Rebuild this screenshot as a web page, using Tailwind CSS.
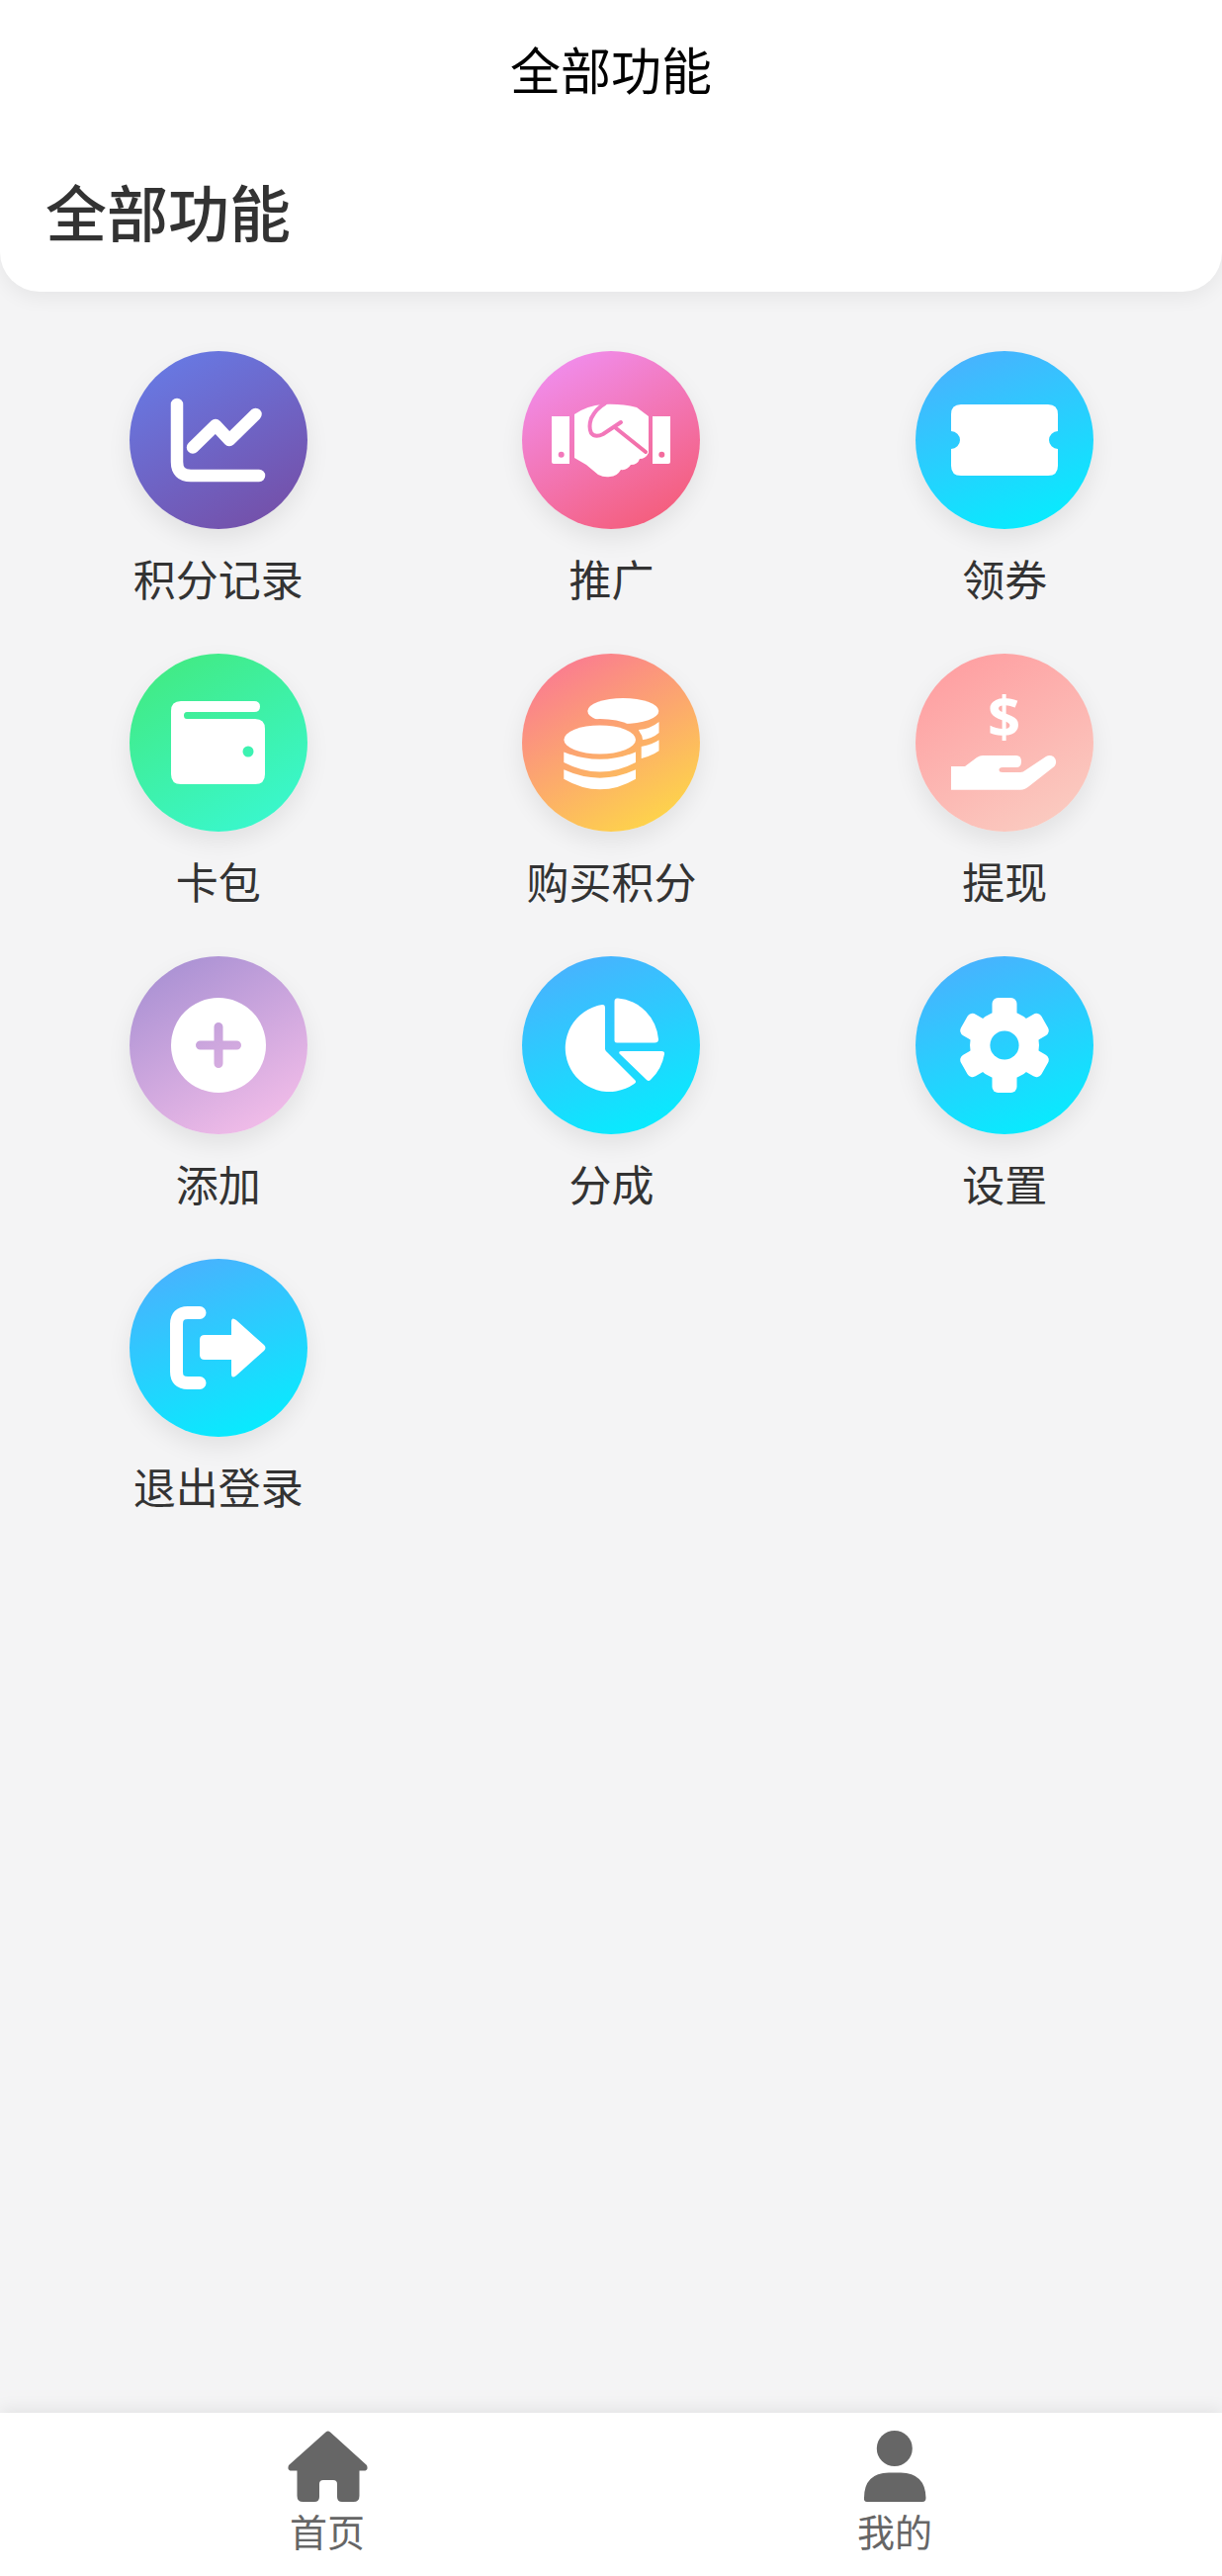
<!DOCTYPE html>
<html lang="zh-CN">
  <head>
    <meta charset="UTF-8" />
    <meta name="viewport" content="width=device-width, initial-scale=1.0" />
    <title>全部功能</title>
    <script src="https://cdn.jsdelivr.net/npm/@tailwindcss/browser@4"></script>
  </head>
  <body class="bg-[#f4f4f5] font-['Noto_Sans_CJK_SC','Liberation_Sans',sans-serif]">
    <div class="flex flex-col h-[2605px] overflow-hidden">
      <!-- header card -->
      <header class="h-[295px] shrink-0 bg-white rounded-b-[40px] shadow-[0_6px_20px_rgba(0,0,0,0.06)]">
        <div class="h-[138px] flex items-center justify-center text-[51px] leading-none text-black">全部功能</div>
        <h1 class="pl-[46px] text-[62px] leading-[150px] font-medium text-[#333]">全部功能</h1>
      </header>

      <!-- grid of functions -->
      <main class="flex-1 grid grid-cols-3 content-start pl-[22px] pr-[21px] pt-[60px]">
        <a class="h-[306px] flex flex-col items-center">
          <div class="w-[180px] h-[180px] rounded-full bg-[linear-gradient(150deg,#667eea,#764ba2)] shadow-[0_10px_24px_rgba(0,0,0,0.08)]">
            <svg viewBox="0 0 180 180" class="w-full h-full" fill="none" stroke="#fff" stroke-width="12.5" stroke-linecap="round" stroke-linejoin="round">
              <path d="M48 54V112Q48 126 62 126H131" />
              <path d="M64 97.5L87 75L101 90L127.5 64" />
            </svg>
          </div>
          <span class="mt-[21px] text-[43px] leading-[56px] text-[#333]">积分记录</span>
        </a>

        <a class="h-[306px] flex flex-col items-center">
          <div class="w-[180px] h-[180px] rounded-full bg-[linear-gradient(150deg,#f093fb,#f5576c)] shadow-[0_10px_24px_rgba(0,0,0,0.08)]">
            <svg viewBox="0 0 180 180" class="w-full h-full">
              <mask id="m-hands" maskUnits="userSpaceOnUse" x="0" y="0" width="180" height="180">
                <rect width="180" height="180" fill="#fff" />
                <circle cx="39.7" cy="104.7" r="3" fill="#000" />
                <circle cx="141.3" cy="104.7" r="3" fill="#000" />
                <path d="M84 53Q75 58 70 68Q67 77 70 83Q74 88 82 84L100 72M95 78L125 102" fill="none" stroke="#000" stroke-width="4" stroke-linecap="round" />
              </mask>
              <g fill="#fff" mask="url(#m-hands)">
                <path d="M30 66H48V114H32Q30 114 30 112Z" />
                <path d="M132 66H150V112Q150 114 148 114H132Z" />
                <path d="M53 64Q66 55 82 54Q100 53 116 57L128 66V103Q125 109 119 109Q117 115 110 115Q106 121 100 120Q96 127 89 127Q83 128 77 125L65 115L53 108Z" />
              </g>
            </svg>
          </div>
          <span class="mt-[21px] text-[43px] leading-[56px] text-[#333]">推广</span>
        </a>

        <a class="h-[306px] flex flex-col items-center">
          <div class="w-[180px] h-[180px] rounded-full bg-[linear-gradient(160deg,#4facfe,#00f2fe)] shadow-[0_10px_24px_rgba(0,0,0,0.08)]">
            <svg viewBox="0 0 180 180" class="w-full h-full" fill="#fff">
              <path d="M46 54H134Q144 54 144 64V81A9 9 0 0 0 144 99V116Q144 126 134 126H46Q36 126 36 116V99A9 9 0 0 0 36 81V64Q36 54 46 54Z" />
            </svg>
          </div>
          <span class="mt-[21px] text-[43px] leading-[56px] text-[#333]">领券</span>
        </a>

        <a class="h-[306px] flex flex-col items-center">
          <div class="w-[180px] h-[180px] rounded-full bg-[linear-gradient(150deg,#43e97b,#38f9d7)] shadow-[0_10px_24px_rgba(0,0,0,0.08)]">
            <svg viewBox="0 0 180 180" class="w-full h-full">
              <mask id="m-wallet" maskUnits="userSpaceOnUse" x="0" y="0" width="180" height="180">
                <rect width="180" height="180" fill="#fff" />
                <circle cx="120" cy="99" r="5.5" fill="#000" />
              </mask>
              <path fill="#fff" mask="url(#m-wallet)" d="M42 58Q42 48 52 48H126Q132 48 132 53.5Q132 59 126 59H58Q55 59 55 62.5Q55 66 58 66H127Q137 66 137 76V122Q137 132 127 132H52Q42 132 42 122Z" />
            </svg>
          </div>
          <span class="mt-[21px] text-[43px] leading-[56px] text-[#333]">卡包</span>
        </a>

        <a class="h-[306px] flex flex-col items-center">
          <div class="w-[180px] h-[180px] rounded-full bg-[linear-gradient(150deg,#fa709a,#fee140)] shadow-[0_10px_24px_rgba(0,0,0,0.08)]">
            <svg viewBox="0 0 180 180" class="w-full h-full" fill="#fff">
              <mask id="m-coins" maskUnits="userSpaceOnUse" x="0" y="0" width="180" height="180">
                <rect width="180" height="180" fill="#fff" />
                <ellipse cx="79" cy="87" rx="43" ry="21" fill="#000" />
              </mask>
              <g mask="url(#m-coins)">
                <ellipse cx="102.3" cy="58" rx="36" ry="13" />
                <path d="M118 77Q130 76 138.5 69V80Q132 86 120 87.5Q120 82 118 77Z" />
                <path d="M120.7 94Q132 92 138.5 87.3V98.3Q132 103 120.7 106Z" />
              </g>
              <ellipse cx="78.7" cy="87" rx="36.3" ry="14.5" />
              <path d="M42.3 99.5Q79 114 115 99.5V110Q79 129 42.3 110Z" />
              <path d="M42.3 117.3Q79 134 115 117.3V126.7Q79 148 42.3 126.7Z" />
            </svg>
          </div>
          <span class="mt-[21px] text-[43px] leading-[56px] text-[#333]">购买积分</span>
        </a>

        <a class="h-[306px] flex flex-col items-center">
          <div class="w-[180px] h-[180px] rounded-full bg-[linear-gradient(150deg,#ff9a9e,#fad0c4)] shadow-[0_10px_24px_rgba(0,0,0,0.08)]">
            <svg viewBox="0 0 180 180" class="w-full h-full" fill="#fff">
              <text x="89.5" y="85" text-anchor="middle" font-size="58" font-weight="700" font-family="Open Sans">$</text>
              <path d="M36 114H50L62 105Q65 103 68 103H102Q107 103 107 109Q107 115 102 115H88Q84.5 115 84.5 117.5Q84.5 120 88 120H106Q109 120 111 118L132 104Q136 102 140 104.5Q144 109 140.5 114L115 134Q111 137.7 106 137.7H36Z" />
            </svg>
          </div>
          <span class="mt-[21px] text-[43px] leading-[56px] text-[#333]">提现</span>
        </a>

        <a class="h-[306px] flex flex-col items-center">
          <div class="w-[180px] h-[180px] rounded-full bg-[linear-gradient(150deg,#a18cd1,#fbc2eb)] shadow-[0_10px_24px_rgba(0,0,0,0.08)]">
            <svg viewBox="0 0 180 180" class="w-full h-full">
              <mask id="m-plus" maskUnits="userSpaceOnUse" x="0" y="0" width="180" height="180">
                <rect width="180" height="180" fill="#fff" />
                <path d="M71.5 90H108.5M90 71.5V108.5" stroke="#000" stroke-width="9" stroke-linecap="round" />
              </mask>
              <circle cx="90" cy="90" r="48" fill="#fff" mask="url(#m-plus)" />
            </svg>
          </div>
          <span class="mt-[21px] text-[43px] leading-[56px] text-[#333]">添加</span>
        </a>

        <a class="h-[306px] flex flex-col items-center">
          <div class="w-[180px] h-[180px] rounded-full bg-[linear-gradient(160deg,#4facfe,#00f2fe)] shadow-[0_10px_24px_rgba(0,0,0,0.08)]">
            <svg viewBox="0 0 180 180" class="w-full h-full" fill="#fff">
              <path d="M93.5 46Q93.5 42 97 42.5A45 45 0 0 1 138 84Q138 87.5 134 87.5H96Q93.5 87.5 93.5 85Z" />
              <path d="M84 52Q84 48.5 81 49A44.3 44.3 0 1 0 113.5 129Q116 127.5 114.5 125.5L86 97Q84.5 96 84 94Z" />
              <path d="M100 96H141Q144.5 96 144 99A46 46 0 0 1 130 125Q128 127 126 125L98.5 98.5Q97.5 96 100 96Z" />
            </svg>
          </div>
          <span class="mt-[21px] text-[43px] leading-[56px] text-[#333]">分成</span>
        </a>

        <a class="h-[306px] flex flex-col items-center">
          <div class="w-[180px] h-[180px] rounded-full bg-[linear-gradient(160deg,#4facfe,#00f2fe)] shadow-[0_10px_24px_rgba(0,0,0,0.08)]">
            <svg viewBox="0 0 180 180" class="w-full h-full">
              <mask id="m-gear" maskUnits="userSpaceOnUse" x="0" y="0" width="180" height="180">
                <rect width="180" height="180" fill="#fff" />
                <circle cx="90" cy="90" r="14.6" fill="#000" />
              </mask>
              <g fill="#fff" mask="url(#m-gear)">
                <circle cx="90" cy="90" r="35" />
                <rect x="77.5" y="42" width="25" height="96" rx="6" />
                <rect x="77.5" y="43" width="25" height="94" rx="6" transform="rotate(60 90 90)" />
                <rect x="77.5" y="43" width="25" height="94" rx="6" transform="rotate(120 90 90)" />
              </g>
            </svg>
          </div>
          <span class="mt-[21px] text-[43px] leading-[56px] text-[#333]">设置</span>
        </a>

        <a class="h-[306px] flex flex-col items-center">
          <div class="w-[180px] h-[180px] rounded-full bg-[linear-gradient(160deg,#4facfe,#00f2fe)] shadow-[0_10px_24px_rgba(0,0,0,0.08)]">
            <svg viewBox="0 0 180 180" class="w-full h-full">
              <path d="M71 54.5H59Q47.5 54.5 47.5 66V114Q47.5 125.5 59 125.5H71" fill="none" stroke="#fff" stroke-width="13" stroke-linecap="round" />
              <path fill="#fff" d="M76 77H103V64Q103 58 108 62L136 87Q139 90 136 93L108 118Q103 122 103 116V102H76Q71 102 71 97V82Q71 77 76 77Z" />
            </svg>
          </div>
          <span class="mt-[21px] text-[43px] leading-[56px] text-[#333]">退出登录</span>
        </a>
      </main>

      <!-- bottom tab bar -->
      <nav class="h-[165px] shrink-0 bg-white grid grid-cols-2 px-[44px] pt-[18px] shadow-[0_-4px_16px_rgba(0,0,0,0.07)]">
        <a class="flex flex-col items-center text-[#666]">
          <svg viewBox="0 0 81 72" class="w-[81px] h-[72px]" fill="#666">
            <path d="M38.5 1.5Q40.8-.5 43 1.5L80 35Q82 40.5 77 40.5H72.5V66Q72.5 72 66.5 72H55Q50 72 50 67V54Q50 50 46 50H36Q32 50 32 54V67Q32 72 27 72H15.5Q9.5 72 9.5 66V40.5H4Q-1 40.5 1 35Z" />
          </svg>
          <span class="mt-[7px] text-[38px] leading-[44px]">首页</span>
        </a>
        <a class="flex flex-col items-center text-[#666]">
          <svg viewBox="0 0 64 72" class="w-[64px] h-[72px]" fill="#666">
            <ellipse cx="31.8" cy="18" rx="18" ry="18" />
            <path d="M1 68Q1 43 26 42.5H38Q63 43 63.5 68Q63.5 72 60 72H4Q.5 72 1 68Z" />
          </svg>
          <span class="mt-[7px] text-[38px] leading-[44px]">我的</span>
        </a>
      </nav>
    </div>
  </body>
</html>
